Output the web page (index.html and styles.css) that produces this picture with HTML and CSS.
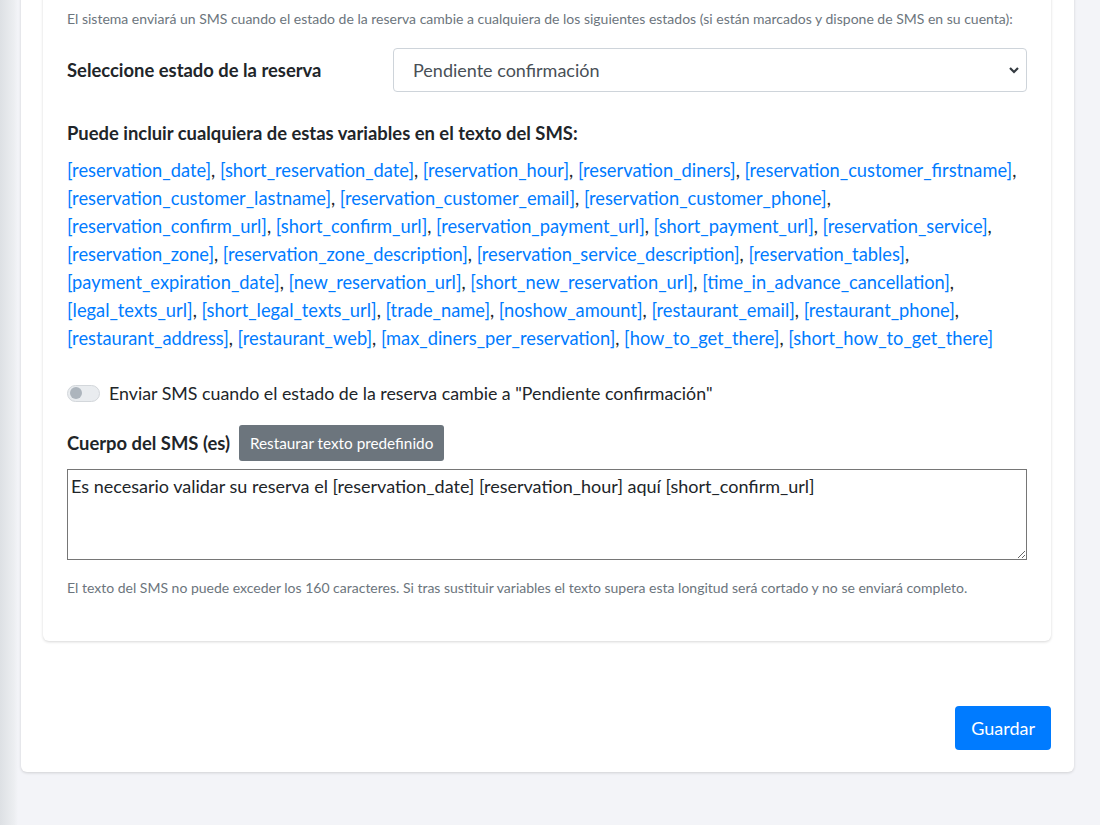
FILE: index.html
```html
<!DOCTYPE html>
<html>
  <head>
    <title>SMS</title>
    <meta name="viewport" content="width=device-width, initial-scale=1.0" />
    <link rel="stylesheet" href="styles.css">
  </head>
  <body>
    <div class="page">
      <div class="panel">
        <div class="card">
          <p class="help top">El sistema enviará un SMS cuando el estado de la reserva cambie a cualquiera de los siguientes estados (si están marcados y dispone de SMS en su cuenta):</p>
          <div class="row">
            <label class="label" for="state">Seleccione estado de la reserva</label>
            <div class="select">
              <span>Pendiente confirmación</span>
              <svg width="12" height="8" viewBox="0 0 12 8"><path d="M2 2l4 4 4-4" fill="none" stroke="#343a40" stroke-width="2.2"/></svg>
            </div>
          </div>
          <p class="label vars-title">Puede incluir cualquiera de estas variables en el texto del SMS:</p>
          <p class="vars">
            <a>[reservation_date]</a>, <a>[short_reservation_date]</a>, <a>[reservation_hour]</a>, <a>[reservation_diners]</a>, <a>[reservation_customer_firstname]</a>,<br>
            <a>[reservation_customer_lastname]</a>, <a>[reservation_customer_email]</a>, <a>[reservation_customer_phone]</a>,<br>
            <a>[reservation_confirm_url]</a>, <a>[short_confirm_url]</a>, <a>[reservation_payment_url]</a>, <a>[short_payment_url]</a>, <a>[reservation_service]</a>,<br>
            <a>[reservation_zone]</a>, <a>[reservation_zone_description]</a>, <a>[reservation_service_description]</a>, <a>[reservation_tables]</a>,<br>
            <a>[payment_expiration_date]</a>, <a>[new_reservation_url]</a>, <a>[short_new_reservation_url]</a>, <a>[time_in_advance_cancellation]</a>,<br>
            <a>[legal_texts_url]</a>, <a>[short_legal_texts_url]</a>, <a>[trade_name]</a>, <a>[noshow_amount]</a>, <a>[restaurant_email]</a>, <a>[restaurant_phone]</a>,<br>
            <a>[restaurant_address]</a>, <a>[restaurant_web]</a>, <a>[max_diners_per_reservation]</a>, <a>[how_to_get_there]</a>, <a>[short_how_to_get_there]</a>
          </p>
          <div class="switch">
            <span class="track"><span class="knob"></span></span>
            <span>Enviar SMS cuando el estado de la reserva cambie a "Pendiente confirmación"</span>
          </div>
          <div class="body-head">
            <span class="label">Cuerpo del SMS (es)</span>
            <button class="btn-grey">Restaurar texto predefinido</button>
          </div>
          <textarea class="text">Es necesario validar su reserva el [reservation_date] [reservation_hour] aquí [short_confirm_url]</textarea>
          <p class="help bottom">El texto del SMS no puede exceder los 160 caracteres. Si tras sustituir variables el texto supera esta longitud será cortado y no se enviará completo.</p>
        </div>
        <div class="actions">
          <button class="btn-blue">Guardar</button>
        </div>
      </div>
    </div>
  </body>
</html>
```

FILE: styles.css
```css
body {
  margin: 0;
  height: 825px;
  overflow: hidden;
  font-family: "Lato", sans-serif;
  color: #212529;
  background: linear-gradient(to right, #dde0e4 0, #eceef1 14px, #f3f4f8 18px, #f3f4f8 100%);
}
.page {
  padding-left: 21px;
  width: 1053px;
}
.panel {
  margin-top: -62px;
  background-color: #fff;
  border-radius: 6px;
  box-shadow: 0 1px 3px rgba(0, 0, 0, 0.15);
  padding: 22px 23px 22px 22px;
}
.card {
  background-color: #fff;
  border-radius: 6px;
  box-shadow: 0 1px 3px rgba(0, 0, 0, 0.16);
  padding: 50px 24px 45px;
}
.help {
  color: #6c757d;
  font-size: 14px;
  margin: 0;
}
.row {
  display: grid;
  grid-template-columns: 326px 1fr;
  align-items: center;
  margin-top: 21px;
}
.label {
  font-weight: bold;
  font-size: 18.4px;
}
.select {
  height: 44px;
  border: 1px solid #ced4da;
  border-radius: 4px;
  box-sizing: border-box;
  display: flex;
  align-items: center;
  justify-content: space-between;
  padding: 0 6px 0 19px;
  font-size: 18px;
  color: #495057;
}
.vars-title {
  margin: 30px 0 0;
}
.vars {
  margin: 12px 0 0;
  font-size: 18.3px;
  line-height: 28px;
}
.vars a {
  color: #007bff;
}
.switch {
  display: flex;
  align-items: center;
  gap: 9px;
  margin-top: 30px;
  font-size: 17.8px;
}
.track {
  width: 33px;
  height: 17px;
  box-sizing: border-box;
  border-radius: 9px;
  background-color: #e9ecef;
  border: 1px solid #d3d7db;
  display: flex;
  align-items: center;
  padding-left: 2px;
}
.knob {
  width: 12px;
  height: 12px;
  border-radius: 50%;
  background-color: #adb5bd;
}
.body-head {
  display: flex;
  align-items: center;
  gap: 9px;
  margin-top: 21px;
}
.btn-grey {
  background-color: #6c757d;
  color: #fff;
  border: 0;
  border-radius: 3px;
  font-family: inherit;
  font-size: 15.3px;
  height: 36px;
  padding: 0 11px;
}
.text {
  display: block;
  width: 100%;
  height: 91px;
  box-sizing: border-box;
  margin-top: 8px;
  border: 1px solid #767676;
  font-family: inherit;
  font-size: 18px;
  color: #212529;
  padding: 5px 3px;
  resize: vertical;
}
.bottom {
  margin-top: 19px;
}
.actions {
  display: flex;
  justify-content: flex-end;
  margin-top: 65px;
}
.btn-blue {
  background-color: #007bff;
  color: #fff;
  border: 0;
  border-radius: 4px;
  font-family: inherit;
  font-size: 18px;
  height: 44px;
  padding: 0 16px;
}
```
